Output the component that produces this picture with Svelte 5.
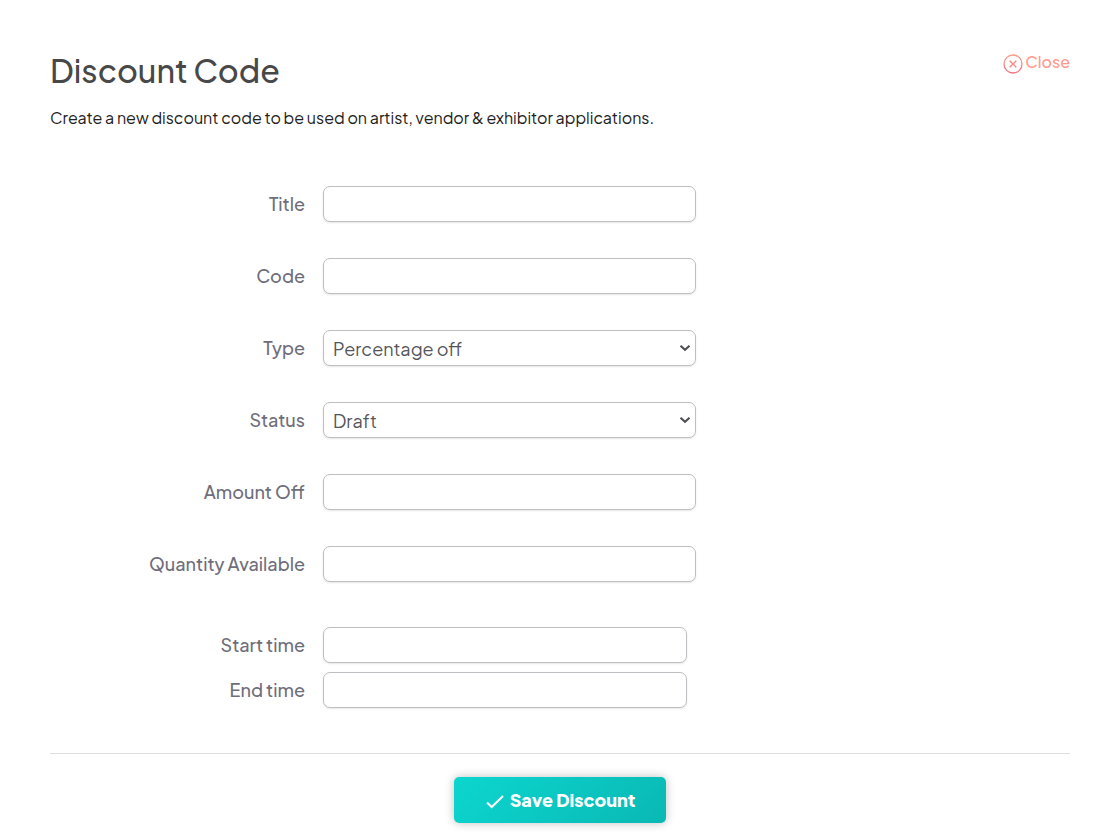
<script>
	let form = $state({
		title: '',
		code: '',
		type: 'percentage',
		status: 'draft',
		amount: '',
		quantity: '',
		start: '',
		end: ''
	});

	const fields = [
		{ id: 'title', label: 'Title' },
		{ id: 'code', label: 'Code' },
		{
			id: 'type',
			label: 'Type',
			options: [
				{ value: 'percentage', text: 'Percentage off' },
				{ value: 'amount', text: 'Amount off' }
			]
		},
		{
			id: 'status',
			label: 'Status',
			options: [
				{ value: 'draft', text: 'Draft' },
				{ value: 'active', text: 'Active' }
			]
		},
		{ id: 'amount', label: 'Amount Off' },
		{ id: 'quantity', label: 'Quantity Available' }
	];

	const times = [
		{ id: 'start', label: 'Start time' },
		{ id: 'end', label: 'End time' }
	];
</script>

<main class="page">
	<header class="page-header">
		<div>
			<h1>Discount Code</h1>
			<p>Create a new discount code to be used on artist, vendor &amp; exhibitor applications.</p>
		</div>
		<a href="#close" class="close-link">
			<svg class="close-icon" viewBox="0 0 20 20" aria-hidden="true">
				<defs>
					<linearGradient id="close-stroke" x1="0" y1="0" x2="0" y2="1">
						<stop offset="0" stop-color="#ff9a8a" />
						<stop offset="1" stop-color="#f5707e" />
					</linearGradient>
				</defs>
				<circle cx="10" cy="10" r="9" stroke="url(#close-stroke)" />
				<path d="M6.7 6.7l6.6 6.6M13.3 6.7l-6.6 6.6" stroke="#fa8484" />
			</svg>
			<span>Close</span>
		</a>
	</header>

	<form onsubmit={(e) => e.preventDefault()}>
		<div class="fields">
			{#each fields as field}
				<div class="row">
					<label for={field.id}>{field.label}</label>
					{#if field.options}
						<div class="select-wrap">
							<select id={field.id} bind:value={form[field.id]}>
								{#each field.options as option}
									<option value={option.value}>{option.text}</option>
								{/each}
							</select>
							<svg class="chevron" viewBox="0 0 12 8" aria-hidden="true">
								<path d="M1.5 1.7L6 5.8l4.5-4.1" />
							</svg>
						</div>
					{:else}
						<input id={field.id} type="text" bind:value={form[field.id]} />
					{/if}
				</div>
			{/each}
		</div>

		<div class="times">
			{#each times as time}
				<div class="row">
					<label for={time.id}>{time.label}</label>
					<input id={time.id} type="text" bind:value={form[time.id]} />
				</div>
			{/each}
		</div>

		<footer>
			<button type="submit" class="save-button">
				<svg class="check" viewBox="0 0 18 16" aria-hidden="true">
					<path d="M1 9.5l4.7 4.5L17 3" />
				</svg>
				<span>Save Discount</span>
			</button>
		</footer>
	</form>
</main>

<style>
	:global(body) {
		background: #fff;
	}

	.page {
		padding: 50px 50px 16px;
		font-family: 'Plus Jakarta Sans', Inter, 'Liberation Sans', sans-serif;
		font-size: 16px;
		color: #212121;
	}

	.page-header {
		display: flex;
		justify-content: space-between;
		align-items: flex-start;
		margin-bottom: 56px;
	}

	h1 {
		margin: 0 0 16px;
		font-size: 32px;
		font-weight: 500;
		line-height: 40px;
		color: #484848;
	}

	p {
		margin: 0;
		line-height: 24px;
	}

	.close-link {
		display: flex;
		align-items: center;
		gap: 2px;
		color: #ff9a8c;
		font-weight: 500;
		line-height: 24px;
		text-decoration: none;
	}

	.close-icon {
		width: 20px;
		height: 20px;
		margin-top: 3px;
		fill: none;
		stroke-width: 1.3;
	}

	.fields {
		display: flex;
		flex-direction: column;
		gap: 36px;
		margin-bottom: 45px;
	}

	.times {
		display: flex;
		flex-direction: column;
		gap: 9px;
		margin-bottom: 45px;
	}

	.row {
		display: grid;
		grid-template-columns: 25% minmax(0, 373px);
		column-gap: 18px;
		align-items: center;
	}

	.times .row {
		grid-template-columns: 25% minmax(0, 364px);
	}

	label {
		color: #6f6e7b;
		font-size: 18px;
		font-weight: 500;
		line-height: 36px;
		text-align: right;
	}

	input,
	select {
		box-sizing: border-box;
		width: 100%;
		height: 36px;
		padding: 0 9px;
		border: 1px solid #bfbfc3;
		border-radius: 7px;
		background: #fff;
		box-shadow: 0 1px 2px rgba(0, 0, 0, 0.1);
		color: #55555a;
		font-family: inherit;
		font-size: 18px;
	}

	select {
		display: block;
		appearance: none;
	}

	.select-wrap {
		position: relative;
	}

	.chevron {
		position: absolute;
		top: 14px;
		right: 5px;
		width: 12px;
		height: 8px;
		fill: none;
		stroke: #4c4c52;
		stroke-width: 2;
		pointer-events: none;
	}

	footer {
		display: flex;
		justify-content: center;
		padding-top: 23px;
		border-top: 1px solid #dedede;
	}

	.save-button {
		display: flex;
		align-items: center;
		gap: 6px;
		height: 46px;
		padding: 0 31px 0 32px;
		border: 0;
		border-radius: 5px;
		background: linear-gradient(135deg, #0cd6cf, #0ab8b4);
		box-shadow: 0 0 10px rgba(0, 0, 0, 0.25);
		color: #fff;
		font-family: inherit;
		font-size: 18px;
		font-weight: 800;
		line-height: 24px;
		cursor: pointer;
	}

	.check {
		width: 18px;
		height: 16px;
		margin-top: 2px;
		fill: none;
		stroke: #fff;
		stroke-width: 2;
	}
</style>
